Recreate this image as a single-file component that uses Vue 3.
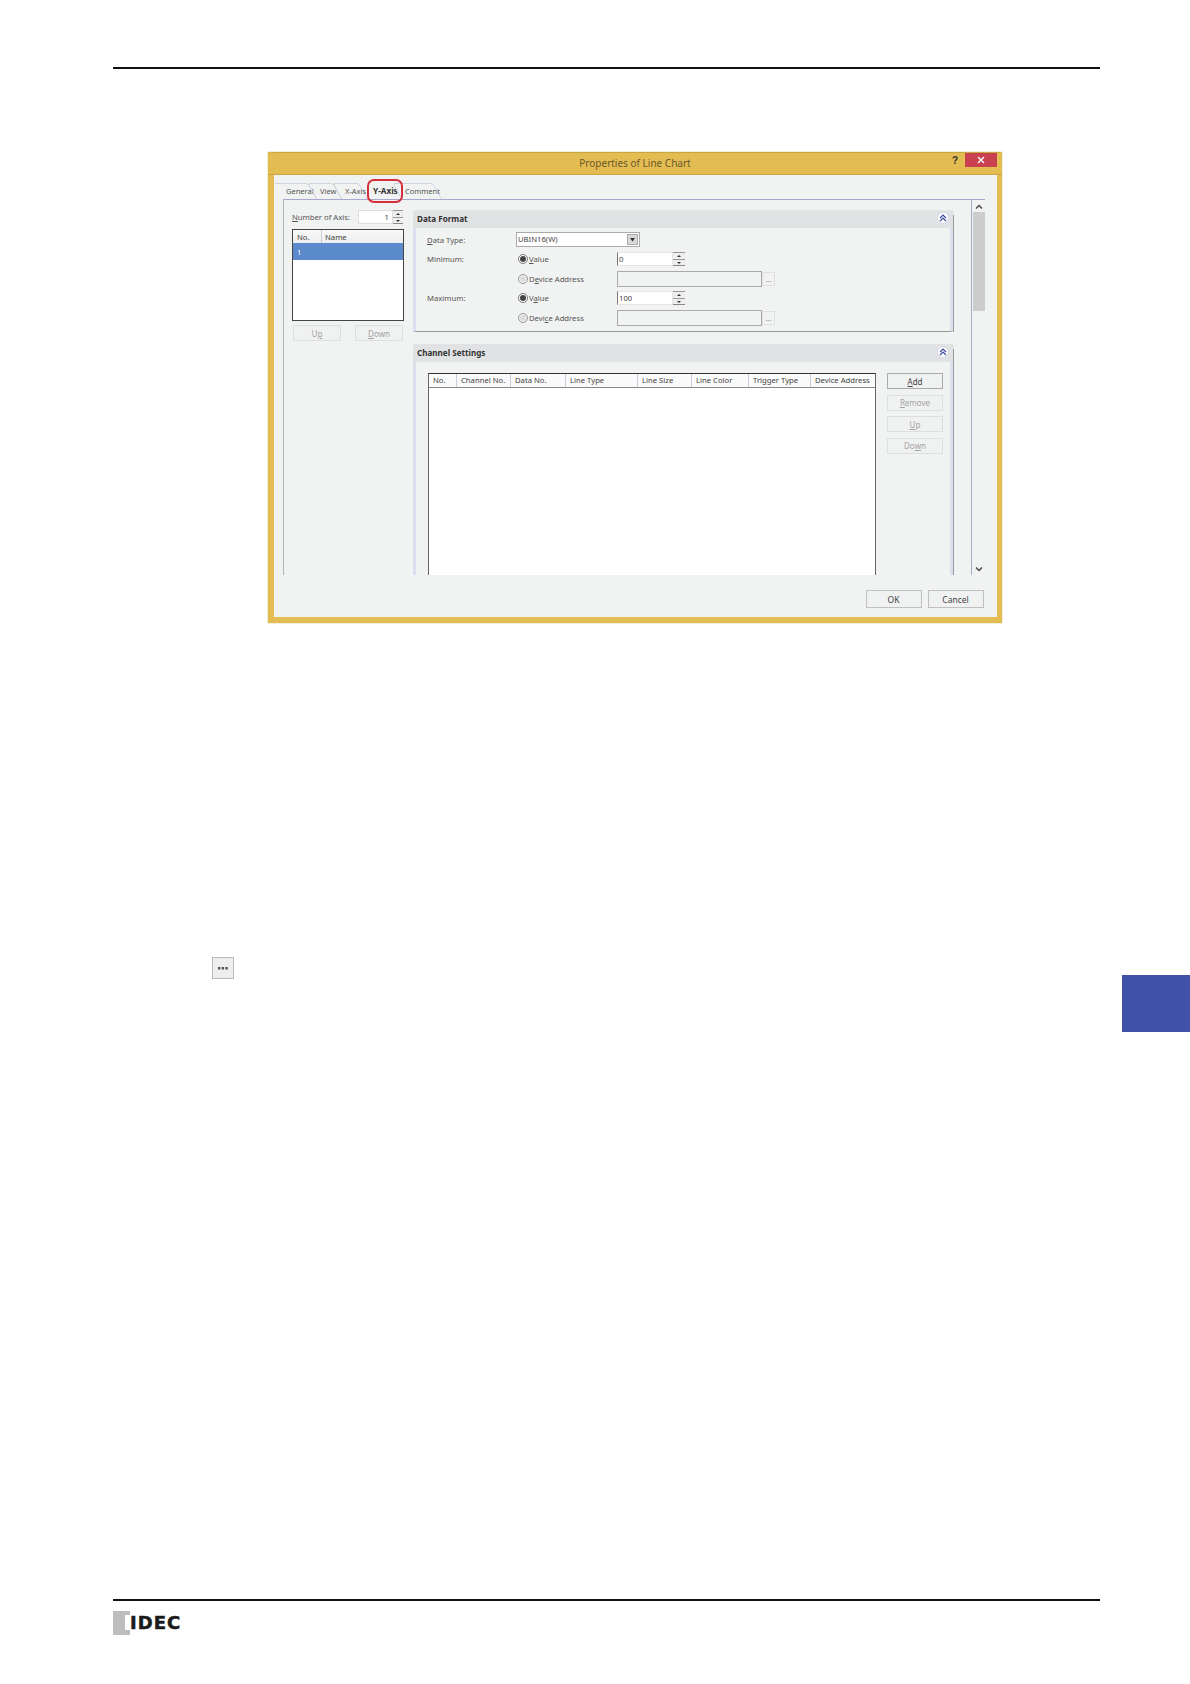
<script setup>
const columns = [
  { label: 'No.', width: 28 },
  { label: 'Channel No.', width: 54 },
  { label: 'Data No.', width: 55 },
  { label: 'Line Type', width: 72 },
  { label: 'Line Size', width: 54 },
  { label: 'Line Color', width: 57 },
  { label: 'Trigger Type', width: 62 },
  { label: 'Device Address', width: 65 }
]
const tabs = ['General', 'View', 'X-Axis', 'Y-Axis', 'Comment']
</script>

<template>
  <div class="page">
    <div class="rule top-rule"></div>

    <section class="dialog">
      <header class="titlebar">
        <span class="title">Properties of Line Chart</span>
        <span class="help">?</span>
        <span class="close">
          <svg width="8" height="8" viewBox="0 0 8 8"><path d="M1 1l6 6M7 1l-6 6" stroke="#fff" stroke-width="1.4" fill="none" /></svg>
        </span>
      </header>

      <div class="dialog-body">
        <nav class="tabs">
          <span v-for="t in tabs" :key="t" class="tab" :class="['tab-' + t.toLowerCase().replace('-', ''), { active: t === 'Y-Axis' }]"><b class="tab-text">{{ t }}</b></span>
          <span class="tab-highlight"></span>
        </nav>

        <div class="pane">
          <div class="left-col">
            <div class="axis-row">
              <span class="label axis-label"><u>N</u>umber of Axis:</span>
              <span class="input axis-input">1</span>
              <span class="spin tall"><i class="up"></i><i class="down"></i></span>
            </div>
            <div class="listbox">
              <div class="list-head"><span class="lh-no">No.</span><span class="lh-name">Name</span></div>
              <div class="list-sel">1</div>
            </div>
            <div class="list-buttons">
              <span class="btn disabled">U<u>p</u></span>
              <span class="btn disabled"><u>D</u>own</span>
            </div>
          </div>

          <div class="panels">
            <div class="panel data-panel">
              <div class="panel-head">
                <span>Data Format</span>
                <span class="collapse">
                  <svg width="8" height="8" viewBox="0 0 8 8"><path d="M1 4l3-3 3 3M1 7l3-3 3 3" fill="none" stroke="#3b4a9a" stroke-width="1.2" /></svg>
                </span>
              </div>
              <div class="panel-body form">
                <span class="label"><u>D</u>ata Type:</span>
                <div class="combo-cell">
                  <span class="combo">UBIN16(W)<span class="drop"><svg width="5" height="4" viewBox="0 0 5 4"><path d="M0 0h5L2.5 3.5z" fill="#333" /></svg></span></span>
                </div>

                <span class="label">Minimum:</span>
                <span class="radio on"><i></i><span class="label"><u>V</u>alue</span></span>
                <span class="value-field"><span class="input val">0</span><span class="spin"><i class="up"></i><i class="down"></i></span></span>

                <span></span>
                <span class="radio"><i></i><span class="label">D<u>e</u>vice Address</span></span>
                <span class="addr-field"><span class="input addr"></span><span class="dots">...</span></span>

                <span class="label">Maximum:</span>
                <span class="radio on"><i></i><span class="label">V<u>a</u>lue</span></span>
                <span class="value-field"><span class="input val">100</span><span class="spin"><i class="up"></i><i class="down"></i></span></span>

                <span></span>
                <span class="radio"><i></i><span class="label">Devi<u>c</u>e Address</span></span>
                <span class="addr-field"><span class="input addr"></span><span class="dots">...</span></span>
              </div>
            </div>

            <div class="panel channel-panel">
              <div class="panel-head">
                <span>Channel Settings</span>
                <span class="collapse">
                  <svg width="8" height="8" viewBox="0 0 8 8"><path d="M1 4l3-3 3 3M1 7l3-3 3 3" fill="none" stroke="#3b4a9a" stroke-width="1.2" /></svg>
                </span>
              </div>
              <div class="panel-body channel-body">
                <div class="table">
                  <div class="table-head">
                    <span v-for="c in columns" :key="c.label" class="th" :style="{ width: c.width + 'px' }">{{ c.label }}</span>
                  </div>
                </div>
                <div class="side-buttons">
                  <span class="btn side"><u>A</u>dd</span>
                  <span class="btn side disabled"><u>R</u>emove</span>
                  <span class="btn side disabled"><u>U</u>p</span>
                  <span class="btn side disabled">Do<u>w</u>n</span>
                </div>
              </div>
            </div>
          </div>

          <div class="scrollbar">
            <svg width="8" height="6" viewBox="0 0 8 6"><path d="M1 4.5L4 1.5l3 3" fill="none" stroke="#444" stroke-width="1.4" /></svg>
            <div class="track"><div class="thumb"></div></div>
            <svg width="8" height="6" viewBox="0 0 8 6"><path d="M1 1.5L4 4.5l3-3" fill="none" stroke="#444" stroke-width="1.4" /></svg>
          </div>
        </div>

        <footer class="dialog-footer">
          <span class="btn foot">OK</span>
          <span class="btn foot">Cancel</span>
        </footer>
      </div>
    </section>

    <div class="mid-row">
      <span class="mini-browse">
        <svg width="10" height="3" viewBox="0 0 10 3"><path d="M0 0h2.4v2.6H0zM3.7 0h2.4v2.6H3.7zM7.4 0h2.4v2.6H7.4z" fill="#555" /></svg>
      </span>
      <span class="side-tab"></span>
    </div>

    <footer class="page-footer">
      <div class="rule"></div>
      <div class="logo">
        <span class="logo-block"></span>
        <span class="logo-text">IDEC</span>
      </div>
    </footer>
  </div>
</template>

<style>
html, body { margin: 0; background: #fff; }
</style>

<style scoped>
.page {
  width: 1190px;
  height: 1684px;
  box-sizing: border-box;
  padding-top: 67px;
  display: flex;
  flex-direction: column;
  font-family: "Noto Sans", "Open Sans", sans-serif;
  font-size: 7.7px;
  color: #444;
  background: #fff;
  overflow: hidden;
}
.rule { height: 2px; margin: 0 90px 0 113px; background: #111; }
.top-rule { flex: none; }

.dialog {
  flex: none;
  margin: 83px 0 0 268px;
  width: 734px;
  height: 471px;
  box-sizing: border-box;
  border: solid #e3bc52;
  border-width: 1px 5px 6px 6px;
  border-top-color: #c9a544;
  background: #f1f2f2;
  display: flex;
  flex-direction: column;
  box-shadow: 0 0 1px #b59a4a;
}
.titlebar {
  flex: none;
  position: relative;
  height: 22px;
  margin: 0 -5px 0 -6px;
  background: #e3bc52;
  border-bottom: 1px solid #c9a544;
  box-sizing: border-box;
  display: flex;
  justify-content: flex-end;
  align-items: flex-start;
  padding-right: 5px;
}
.title {
  position: absolute;
  left: 0;
  right: 0;
  top: 3px;
  text-align: center;
  font-size: 10px;
  line-height: 15px;
  color: #6b5a2a;
}
.help { margin: 2px 7px 0 0; font: bold 10px/12px "Liberation Sans", sans-serif; color: #333; }
.close {
  width: 32px;
  height: 14px;
  background: #c9404f;
  display: flex;
  align-items: center;
  justify-content: center;
}

.dialog-body {
  flex: 1;
  min-height: 0;
  padding: 0 12px 0 9px;
  display: flex;
  flex-direction: column;
}
.tabs {
  flex: none;
  position: relative;
  z-index: 1;
  height: 24px;
  display: flex;
  align-items: flex-end;
}
.tab {
  position: relative;
  height: 16px;
  box-sizing: border-box;
  padding-left: 3px;
}
.tab::before {
  content: "";
  position: absolute;
  left: -1px;
  right: 0;
  top: 0;
  bottom: 0;
  border: 1px solid #cfd1de;
  border-bottom: 0;
  border-radius: 3px 3px 0 0;
  transform: skewX(28deg);
  transform-origin: bottom;
}
.tab-general::before { border-left: 0; }
.tab.active::before { display: none; }
.tab-text {
  position: relative;
  font-weight: 400;
  font-size: 7.5px;
  line-height: 16px;
  color: #555;
  white-space: nowrap;
}
.tab-general { width: 34px; }
.tab-view { width: 25px; }
.tab-xaxis { width: 26px; }
.tab-yaxis { width: 34px; padding-left: 5px; }
.tab-comment { width: 40px; }
.tab.active .tab-text { font-weight: 700; font-size: 8.2px; color: #333; }
.tab-highlight {
  position: absolute;
  left: 84px;
  top: 4px;
  width: 36px;
  height: 24px;
  box-sizing: border-box;
  border: 2px solid #d3303b;
  border-radius: 7px;
}

.pane {
  flex: none;
  height: 376px;
  box-sizing: border-box;
  border-top: 1px solid #a9a9d0;
  border-left: 1px solid #b5b5b5;
  display: flex;
  overflow: hidden;
}
.label { color: #555; white-space: nowrap; }
.left-col { flex: none; width: 120px; padding: 10px 0 0 8px; box-sizing: border-box; }
.axis-row { display: flex; align-items: center; height: 14px; }
.axis-label { width: 66px; }
.input {
  box-sizing: border-box;
  background: #fff;
  border: 1px solid #aaa;
  border-left-color: #777;
  line-height: 12px;
  color: #444;
}
.axis-input { width: 35px; height: 14px; text-align: right; padding-right: 3px; border-color: #ddd; }
.spin {
  flex: none;
  width: 12px;
  height: 14px;
  display: flex;
  flex-direction: column;
  justify-content: center;
  gap: 1px;
  background: #eee;
  box-sizing: border-box;
  border-bottom: 1px solid #888;
}
.spin.tall { width: 10px; }
.spin i {
  flex: 1;
  display: flex;
  align-items: center;
  justify-content: center;
  border-top: 1px solid #999;
}
.spin i::after {
  content: "";
  border-left: 2px solid transparent;
  border-right: 2px solid transparent;
}
.spin .up::after { border-bottom: 2.5px solid #333; }
.spin .down::after { border-top: 2.5px solid #333; }

.listbox {
  margin-top: 5px;
  width: 112px;
  height: 92px;
  box-sizing: border-box;
  background: #fff;
  border: 1px solid #444;
}
.list-head {
  height: 13px;
  display: flex;
  line-height: 14px;
  background: linear-gradient(#f8f8f8, #eee);
  color: #444;
}
.lh-no { width: 29px; padding-left: 4px; box-sizing: border-box; border-right: 1px solid #ccc; }
.lh-name { padding-left: 3px; }
.list-sel {
  height: 17px;
  line-height: 18px;
  background: #5b8bcc;
  color: #fff;
  padding-left: 4px;
}
.list-buttons { margin-top: 4px; padding: 0 1px; display: flex; justify-content: space-between; width: 110px; }

.btn {
  box-sizing: border-box;
  background: #f0f1f1;
  border: 1px solid #aaa;
  display: flex;
  align-items: center;
  justify-content: center;
  color: #444;
  white-space: pre;
  font-size: 8px;
}
.btn.disabled { color: #a4a4a4; border-color: #dedfdf; }
.list-buttons .btn { width: 48px; height: 16px; }

.panels { flex: none; width: 567px; padding: 10px 0 0 9px; box-sizing: border-box; }
.panel { width: 541px; }
.panel-head {
  position: relative;
  height: 18px;
  background: #e1e2e3;
  border-radius: 3px 3px 0 0;
  display: flex;
  align-items: center;
  justify-content: space-between;
  padding: 0 4px 2px;
  box-sizing: border-box;
  font-size: 8.1px;
  font-weight: 700;
  color: #333;
}
.panel-head::after {
  content: "";
  position: absolute;
  right: 0;
  top: 5px;
  bottom: 0;
  width: 1px;
  background: #999;
}
.collapse {
  width: 12px;
  height: 12px;
  border-radius: 50%;
  background: #fff;
  border: 1px solid #d4d8ea;
  box-sizing: border-box;
  display: flex;
  align-items: center;
  justify-content: center;
  margin-right: 1px;
}
.panel-body {
  box-sizing: border-box;
  border-left: 3px solid #dcdfee;
  border-right: 3px solid #dcdfee;
  box-shadow: 1px 0 0 #999;
  width: 540px;
}
.data-panel { height: 122px; }
.form {
  height: 104px;
  border-bottom: 1px solid #999;
  padding: 2px 0 0 11px;
  display: grid;
  grid-template-columns: 89px 101px 1fr;
  grid-auto-rows: 19.5px;
  align-items: center;
}
.combo-cell { grid-column: 2 / 4; }
.combo {
  position: relative;
  display: block;
  width: 124px;
  height: 15px;
  line-height: 13px;
  padding-left: 1px;
  box-sizing: border-box;
  background: #fff;
  border: 1px solid #aaa;
  color: #444;
}
.drop {
  position: absolute;
  right: 1px;
  top: 1px;
  width: 11px;
  height: 11px;
  background: #d9d9d9;
  border: 1px solid #aaa;
  box-sizing: border-box;
  display: flex;
  align-items: center;
  justify-content: center;
}
.radio { display: flex; align-items: center; gap: 1px; padding-left: 2px; }
.radio i {
  width: 10px;
  height: 10px;
  border-radius: 50%;
  border: 1px solid #999;
  box-sizing: border-box;
  background: #f1f2f2;
  display: flex;
  align-items: center;
  justify-content: center;
}
.radio i::after { content: ""; width: 6px; height: 6px; border-radius: 50%; background: #dcdcdc; }
.radio.on i { background: #fff; border-color: #777; }
.radio.on i::after { background: #444; }
.value-field { display: flex; align-items: center; width: 68px; }
.value-field .input { flex: 1; height: 14px; border-color: #e6e6e6; border-left-color: #777; padding-left: 1px; }
.value-field .spin { border-top: 0; }
.addr-field { display: flex; align-items: center; }
.input.addr { width: 145px; height: 16px; background: #f1f2f2; border-color: #aaa; }
.dots {
  width: 13px;
  height: 14px;
  line-height: 13px;
  text-align: center;
  font-size: 7px;
  color: #888;
  border: 1px solid #e0e0e0;
  box-sizing: border-box;
}

.channel-panel { margin-top: 12px; }
.channel-body {
  height: 300px;
  display: flex;
  padding: 11px 0 0 12px;
}
.table {
  flex: none;
  width: 448px;
  height: 300px;
  box-sizing: border-box;
  background: #fff;
  border: 1px solid #666;
  border-top-color: #333;
}
.table-head {
  display: flex;
  height: 13px;
  border-bottom: 1px solid #888;
  background: #fafafa;
}
.th {
  box-sizing: border-box;
  flex: none;
  padding-left: 4px;
  line-height: 13px;
  border-right: 1px solid #ccd;
  color: #444;
  white-space: nowrap;
  overflow: hidden;
}
.th:last-child { border-right: 0; }
.side-buttons {
  margin-left: 11px;
  display: flex;
  flex-direction: column;
  gap: 5.5px;
}
.btn.side { width: 56px; height: 16px; }

.scrollbar {
  flex: 1;
  border-left: 1px solid #a9a9d0;
  box-sizing: border-box;
  display: flex;
  flex-direction: column;
  align-items: center;
  padding: 4px 0 3px;
  background: #f1f2f2;
}
.track { flex: 1; width: 100%; padding-top: 2px; }
.thumb { height: 99px; margin-left: 1px; background: #cdcdcd; }

.dialog-footer {
  flex: 1;
  display: flex;
  justify-content: flex-end;
  gap: 6px;
  padding: 15px 1.5px 0 0;
}
.btn.foot { width: 56px; height: 18px; font-size: 8.5px; border-color: #c0c0c0; }

.mid-row {
  flex: none;
  margin-top: 334px;
  height: 75px;
  position: relative;
}
.mini-browse {
  position: absolute;
  left: 212px;
  top: 0;
  width: 22px;
  height: 22px;
  box-sizing: border-box;
  background: #eee;
  border: 1px solid #bbb;
  display: flex;
  align-items: center;
  justify-content: center;
}
.side-tab {
  position: absolute;
  left: 1122px;
  top: 18px;
  width: 68px;
  height: 57px;
  background: #3f51a8;
}

.page-footer { margin-top: auto; height: 85px; flex: none; }
.logo { margin: 10px 0 0 113px; display: flex; align-items: center; height: 24px; }
.logo-block {
  width: 17px;
  height: 24px;
  background:
    linear-gradient(90deg, #bdbdbd 12px, transparent 12px),
    linear-gradient(#bdbdbd 4px, #fff 4px, #fff 19px, #bdbdbd 19px);
}
.logo-text {
  font-family: "DejaVu Sans", sans-serif;
  font-weight: 700;
  font-size: 18px;
  line-height: 24px;
  letter-spacing: 1px;
  color: #1a1a1a;
  -webkit-text-stroke: 0.5px #1a1a1a;
}
</style>
